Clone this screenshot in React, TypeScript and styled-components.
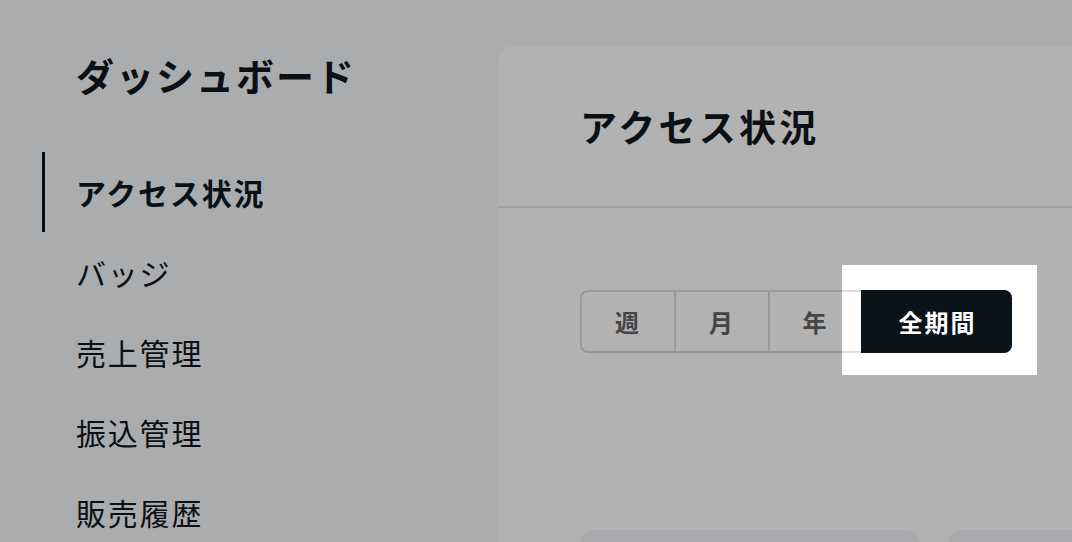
import React from "react";
import styled, { createGlobalStyle } from "styled-components";

// Page-level reset and base font
const GlobalStyle = createGlobalStyle`
  html, body {
    margin: 0;
    padding: 0;
    background: #f5f7fa;
    overflow: hidden;
  }
  body {
    font-family: "Noto Sans CJK JP", "Noto Sans", sans-serif;
    color: #111820;
  }
`;

const Page = styled.div`
  display: flex;
  width: 1072px;
  height: 542px;
  overflow: hidden;
`;

const Sidebar = styled.aside`
  width: 498px;
  flex-shrink: 0;
  padding-top: 48px;
  box-sizing: border-box;
`;

const SideTitle = styled.h1`
  margin: 0 0 50px 76px;
  font-size: 38px;
  line-height: 54px;
  font-weight: 700;
  letter-spacing: 2px;
  color: #111820;
`;

const NavList = styled.nav`
  display: flex;
  flex-direction: column;
`;

const NavItem = styled.a<{ $active?: boolean }>`
  display: flex;
  align-items: center;
  height: 80px;
  margin-left: 42px;
  padding-left: 31px;
  border-left: 3px solid ${(p) => (p.$active ? "#111820" : "transparent")};
  font-size: 30px;
  font-weight: ${(p) => (p.$active ? 700 : 400)};
  letter-spacing: 1.8px;
  color: #111820;
  text-decoration: none;
`;

const Main = styled.main`
  flex: 1;
  padding-top: 46px;
`;

const Card = styled.section`
  width: 720px;
  min-height: 560px;
  background: #ffffff;
  border-radius: 16px 0 0 0;
`;

const CardHeader = styled.header`
  display: flex;
  align-items: center;
  height: 160px;
  padding-left: 82px;
  border-bottom: 2px solid #e6e6e6;
`;

const CardTitle = styled.h2`
  margin: 0;
  font-size: 37px;
  font-weight: 700;
  letter-spacing: 3.2px;
  color: #111820;
`;

const CardBody = styled.div`
  padding: 82px 0 0 82px;
`;

const Segment = styled.div`
  display: inline-flex;
  height: 63px;
`;

type Edge = "first" | "middle" | "last";

const radiusFor = (edge: Edge) =>
  edge === "first" ? "8px 0 0 8px" : edge === "last" ? "0 8px 8px 0" : "0";

const SegButton = styled.button<{ $active?: boolean; $w: number; $edge: Edge }>`
  width: ${(p) => p.$w}px;
  height: 63px;
  box-sizing: border-box;
  margin: 0;
  padding: 0;
  font-family: inherit;
  font-size: 24px;
  font-weight: 700;
  letter-spacing: 2px;
  color: ${(p) => (p.$active ? "#ffffff" : "#626262")};
  background: ${(p) => (p.$active ? "#0a121a" : "#ffffff")};
  border: 2px solid ${(p) => (p.$active ? "#0a121a" : "#dcdcdc")};
  border-right: none;
  border-radius: ${(p) => radiusFor(p.$edge)};
  cursor: pointer;
`;

// keeps the spotlight pinned to the highlighted button
const SpotAnchor = styled.span`
  position: relative;
  display: inline-flex;
`;

const Spotlight = styled.span`
  position: absolute;
  top: -25px;
  left: -19px;
  right: -25px;
  bottom: -22px;
  box-shadow: 0 0 0 3000px rgba(0, 0, 0, 0.3);
  pointer-events: none;
  z-index: 100;
`;

const StatRow = styled.div`
  display: flex;
  gap: 28px;
  margin-top: 177px;
`;

const StatCard = styled.div`
  width: 340px;
  height: 120px;
  flex-shrink: 0;
  background: #f1f3f6;
  border-radius: 14px;
`;

const navItems = ["アクセス状況", "バッジ", "売上管理", "振込管理", "販売履歴"];

const App: React.FC = () => {
  return (
    <>
      <GlobalStyle />
      <Page>
        <Sidebar>
          <SideTitle>ダッシュボード</SideTitle>
          <NavList>
            {navItems.map((label, i) => (
              <NavItem key={label} $active={i === 0}>
                {label}
              </NavItem>
            ))}
          </NavList>
        </Sidebar>
        <Main>
          <Card>
            <CardHeader>
              <CardTitle>アクセス状況</CardTitle>
            </CardHeader>
            <CardBody>
              <Segment>
                <SegButton $w={94} $edge="first">週</SegButton>
                <SegButton $w={94} $edge="middle">月</SegButton>
                <SegButton $w={93} $edge="middle">年</SegButton>
                <SpotAnchor>
                  <SegButton $w={151} $edge="last" $active>
                    全期間
                  </SegButton>
                  <Spotlight />
                </SpotAnchor>
              </Segment>
              <StatRow>
                <StatCard />
                <StatCard />
              </StatRow>
            </CardBody>
          </Card>
        </Main>
      </Page>
    </>
  );
};

export default App;
